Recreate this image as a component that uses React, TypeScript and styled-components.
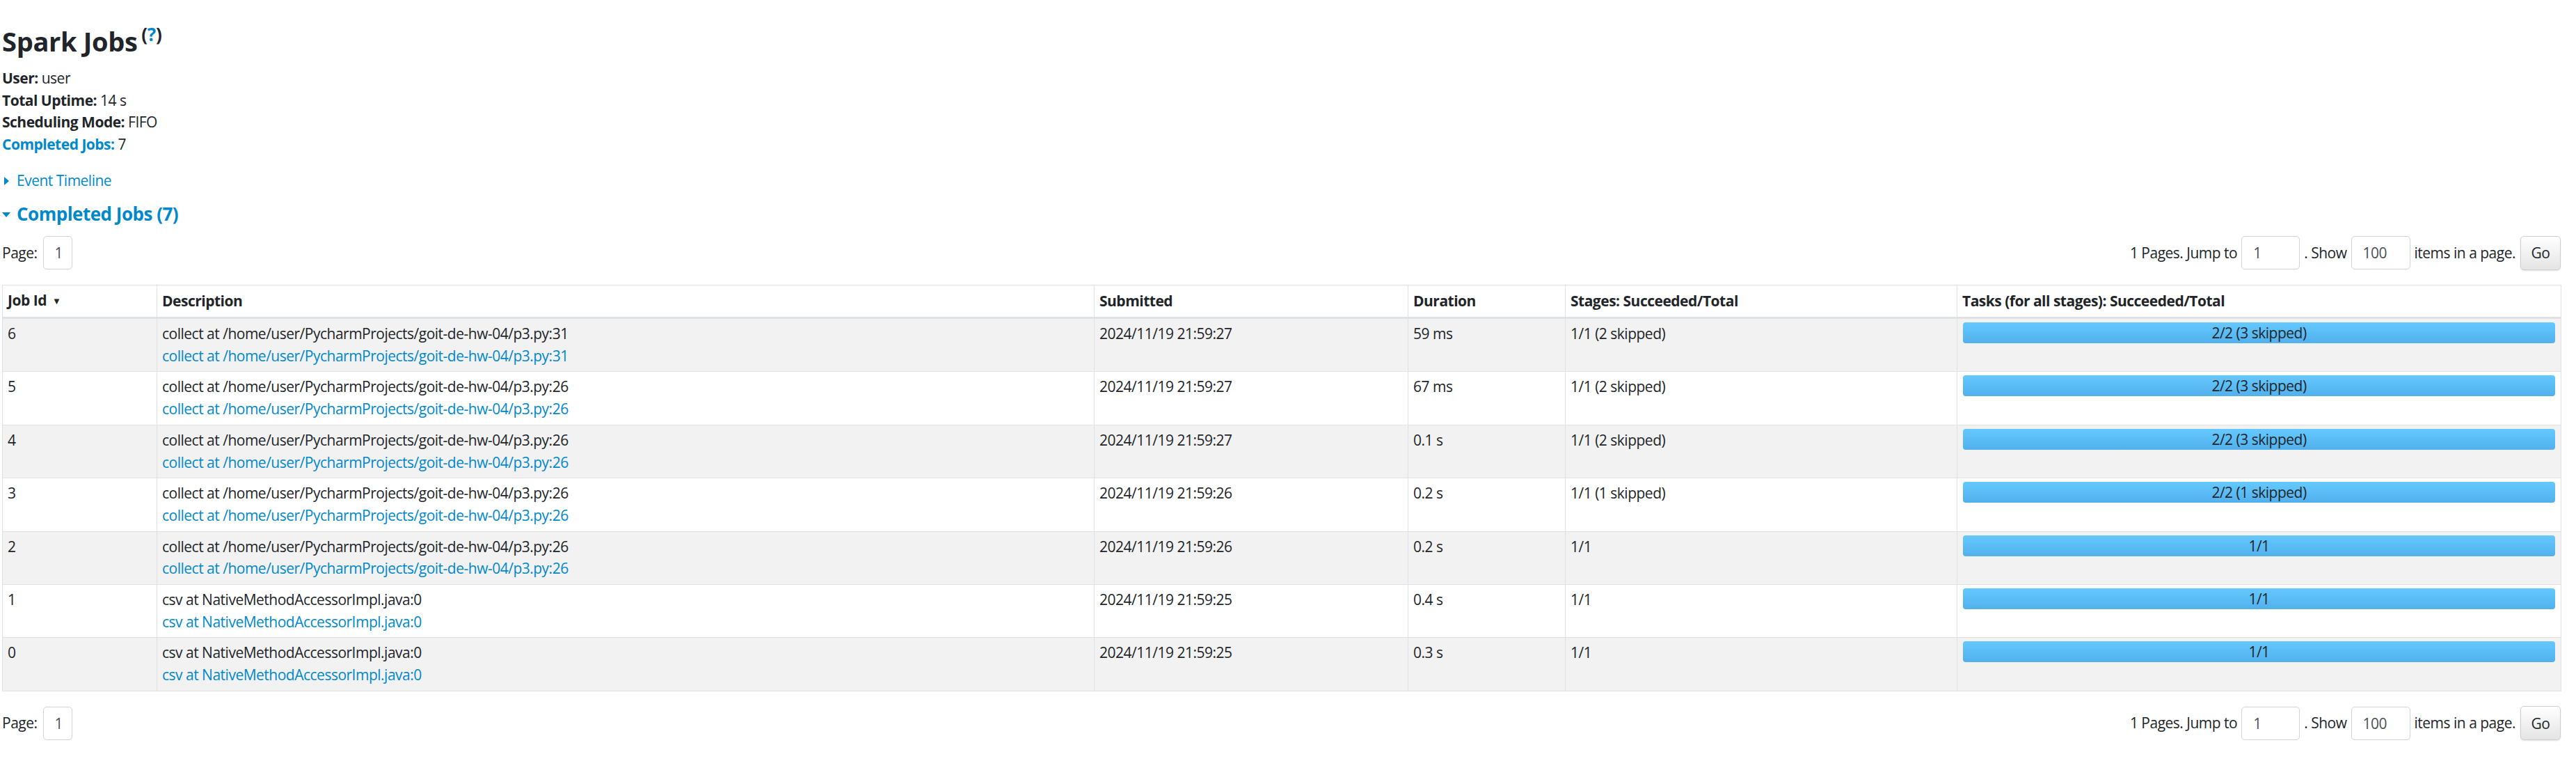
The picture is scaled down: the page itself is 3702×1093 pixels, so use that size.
import React from "react";
import styled, { createGlobalStyle } from "styled-components";

const FONT = `"Open Sans", "Noto Sans", sans-serif`;
const LINK = "#0088cc";
const TEXT = "#212529";
const BORDER = "#dee2e6";

const GlobalStyle = createGlobalStyle`
  html, body { margin: 0; padding: 0; background: #ffffff; }
  body {
    font-family: ${FONT};
    font-size: 21px;
    line-height: 31.5px;
    letter-spacing: -0.5px;
    color: ${TEXT};
  }
`;

const Page = styled.div`
  padding: 36.5px 22px 30px 3px;
`;

const Title = styled.h3`
  margin: 0 0 15px;
  font-size: 38px;
  line-height: 45.6px;
  font-weight: 700;
  letter-spacing: -0.3px;
  color: ${TEXT};
`;

const Help = styled.sup`
  font-size: 26px;
  line-height: 0;
  position: relative;
  vertical-align: baseline;
  top: -0.55em;
  margin-left: -4px;
`;

const HelpLink = styled.a`
  color: ${LINK};
  text-decoration: none;
`;

const Summary = styled.ul`
  list-style: none;
  margin: 0 0 21px;
  padding: 0;
`;

const SummaryItem = styled.li`
  margin: 0;
`;

const Label = styled.strong<{ $link?: boolean }>`
  font-weight: 700;
  color: ${(p) => (p.$link ? LINK : TEXT)};
`;

const Toggle = styled.div`
  display: flex;
  align-items: center;
  color: ${LINK};
  margin: 0 0 16px;
`;

const ArrowRight = styled.span`
  width: 0;
  height: 0;
  border-top: 6px solid transparent;
  border-bottom: 6px solid transparent;
  border-left: 7px solid ${LINK};
  margin: 0 11px 0 3px;
`;

const ArrowDown = styled.span`
  width: 0;
  height: 0;
  border-left: 6.5px solid transparent;
  border-right: 6.5px solid transparent;
  border-top: 7px solid ${LINK};
  margin: 3px 9px 0 0;
`;

const SectionTitle = styled.h4`
  display: flex;
  align-items: center;
  margin: 0 0 16.5px;
  font-size: 26px;
  line-height: 31.2px;
  font-weight: 700;
  color: ${LINK};
`;

const PagerRow = styled.div<{ $bottom?: boolean }>`
  display: flex;
  justify-content: space-between;
  align-items: center;
  height: 48px;
  margin: ${(p) => (p.$bottom ? "22px 0 0" : "0 0 22px")};
`;

const PagerGroup = styled.div`
  display: flex;
  align-items: center;
  gap: 6px;
`;

const PageLabel = styled.span`
  margin-right: 2px;
`;

const NumInput = styled.input<{ $w: number }>`
  box-sizing: border-box;
  width: ${(p) => p.$w}px;
  height: 48px;
  padding: 0 0 0 16px;
  border: 1px solid #ced4da;
  border-radius: 5px;
  font-family: ${FONT};
  font-size: 21px;
  letter-spacing: -0.5px;
  color: #495057;
  background: #fff;
  outline: none;
`;

const GoButton = styled.button`
  box-sizing: border-box;
  width: 58px;
  height: 49px;
  margin-left: 1px;
  border: 1px solid #cfcfcf;
  border-radius: 5px;
  background: linear-gradient(to bottom, #ffffff, #e4e4e4);
  box-shadow: 0 1px 2px rgba(0, 0, 0, 0.12);
  font-family: ${FONT};
  font-size: 21px;
  letter-spacing: -0.5px;
  color: ${TEXT};
  padding: 0;
`;

const Table = styled.table`
  width: 3677px;
  table-layout: fixed;
  border-collapse: collapse;
  border: 1px solid ${BORDER};
`;

const Th = styled.th`
  text-align: left;
  font-weight: 700;
  padding: 6px 7px;
  line-height: 31.7px;
  border: 1px solid ${BORDER};
  border-bottom: 3px solid ${BORDER};
  white-space: nowrap;
`;

const SortMark = styled.span`
  font-size: 13px;
  margin-left: 8px;
  vertical-align: 2px;
`;

const Tr = styled.tr<{ $striped: boolean }>`
  background: ${(p) => (p.$striped ? "#f2f2f2" : "#ffffff")};
`;

const Td = styled.td`
  vertical-align: top;
  padding: 6px 7px;
  line-height: 31.7px;
  border: 1px solid ${BORDER};
`;

const DescText = styled.div``;

const DescLink = styled.a`
  display: block;
  color: ${LINK};
  text-decoration: none;
`;

const BarCell = styled.td`
  vertical-align: top;
  padding: 0 8px 6px;
  border: 1px solid ${BORDER};
  height: 69px;
`;

const Bar = styled.div`
  margin-top: 5px;
  height: 30px;
  line-height: 30px;
  border-radius: 4px;
  background: linear-gradient(to bottom, #64c9fe, #52b0ec);
  text-align: center;
  color: ${TEXT};
  white-space: nowrap;
`;

type Job = {
  id: number;
  desc: string;
  submitted: string;
  duration: string;
  stages: string;
  tasks: string;
};

const P31 = "collect at /home/user/PycharmProjects/goit-de-hw-04/p3.py:31";
const P26 = "collect at /home/user/PycharmProjects/goit-de-hw-04/p3.py:26";
const CSV = "csv at NativeMethodAccessorImpl.java:0";

const jobs: Job[] = [
  { id: 6, desc: P31, submitted: "2024/11/19 21:59:27", duration: "59 ms", stages: "1/1 (2 skipped)", tasks: "2/2 (3 skipped)" },
  { id: 5, desc: P26, submitted: "2024/11/19 21:59:27", duration: "67 ms", stages: "1/1 (2 skipped)", tasks: "2/2 (3 skipped)" },
  { id: 4, desc: P26, submitted: "2024/11/19 21:59:27", duration: "0.1 s", stages: "1/1 (2 skipped)", tasks: "2/2 (3 skipped)" },
  { id: 3, desc: P26, submitted: "2024/11/19 21:59:26", duration: "0.2 s", stages: "1/1 (1 skipped)", tasks: "2/2 (1 skipped)" },
  { id: 2, desc: P26, submitted: "2024/11/19 21:59:26", duration: "0.2 s", stages: "1/1", tasks: "1/1" },
  { id: 1, desc: CSV, submitted: "2024/11/19 21:59:25", duration: "0.4 s", stages: "1/1", tasks: "1/1" },
  { id: 0, desc: CSV, submitted: "2024/11/19 21:59:25", duration: "0.3 s", stages: "1/1", tasks: "1/1" },
];

const colWidths = [222, 1347, 451, 226, 563, 868];

function Pager({ bottom }: { bottom?: boolean }) {
  return (
    <PagerRow $bottom={bottom}>
      <PagerGroup>
        <PageLabel>Page:</PageLabel>
        <NumInput $w={42} defaultValue="1" readOnly />
      </PagerGroup>
      <PagerGroup>
        <span>1 Pages. Jump to</span>
        <NumInput $w={84} defaultValue="1" readOnly />
        <span>. Show</span>
        <NumInput $w={85} defaultValue="100" readOnly />
        <span>items in a page.</span>
        <GoButton>Go</GoButton>
      </PagerGroup>
    </PagerRow>
  );
}

export default function App() {
  return (
    <>
      <GlobalStyle />
      <Page>
        <Title>
          Spark Jobs{" "}
          <Help>
            (<HelpLink>?</HelpLink>)
          </Help>
        </Title>
        <Summary>
          <SummaryItem>
            <Label>User:</Label> user
          </SummaryItem>
          <SummaryItem>
            <Label>Total Uptime:</Label> 14 s
          </SummaryItem>
          <SummaryItem>
            <Label>Scheduling Mode:</Label> FIFO
          </SummaryItem>
          <SummaryItem>
            <Label $link>Completed Jobs:</Label> 7
          </SummaryItem>
        </Summary>
        <Toggle>
          <ArrowRight />
          Event Timeline
        </Toggle>
        <SectionTitle>
          <ArrowDown />
          Completed Jobs (7)
        </SectionTitle>
        <Pager />
        <Table>
          <colgroup>
            {colWidths.map((w, i) => (
              <col key={i} style={{ width: w }} />
            ))}
          </colgroup>
          <thead>
            <tr>
              <Th>
                Job Id<SortMark>▼</SortMark>
              </Th>
              <Th>Description</Th>
              <Th>Submitted</Th>
              <Th>Duration</Th>
              <Th>Stages: Succeeded/Total</Th>
              <Th>Tasks (for all stages): Succeeded/Total</Th>
            </tr>
          </thead>
          <tbody>
            {jobs.map((j, i) => (
              <Tr key={j.id} $striped={i % 2 === 0}>
                <Td>{j.id}</Td>
                <Td>
                  <DescText>{j.desc}</DescText>
                  <DescLink>{j.desc}</DescLink>
                </Td>
                <Td>{j.submitted}</Td>
                <Td>{j.duration}</Td>
                <Td>{j.stages}</Td>
                <BarCell>
                  <Bar>{j.tasks}</Bar>
                </BarCell>
              </Tr>
            ))}
          </tbody>
        </Table>
        <Pager bottom />
      </Page>
    </>
  );
}
